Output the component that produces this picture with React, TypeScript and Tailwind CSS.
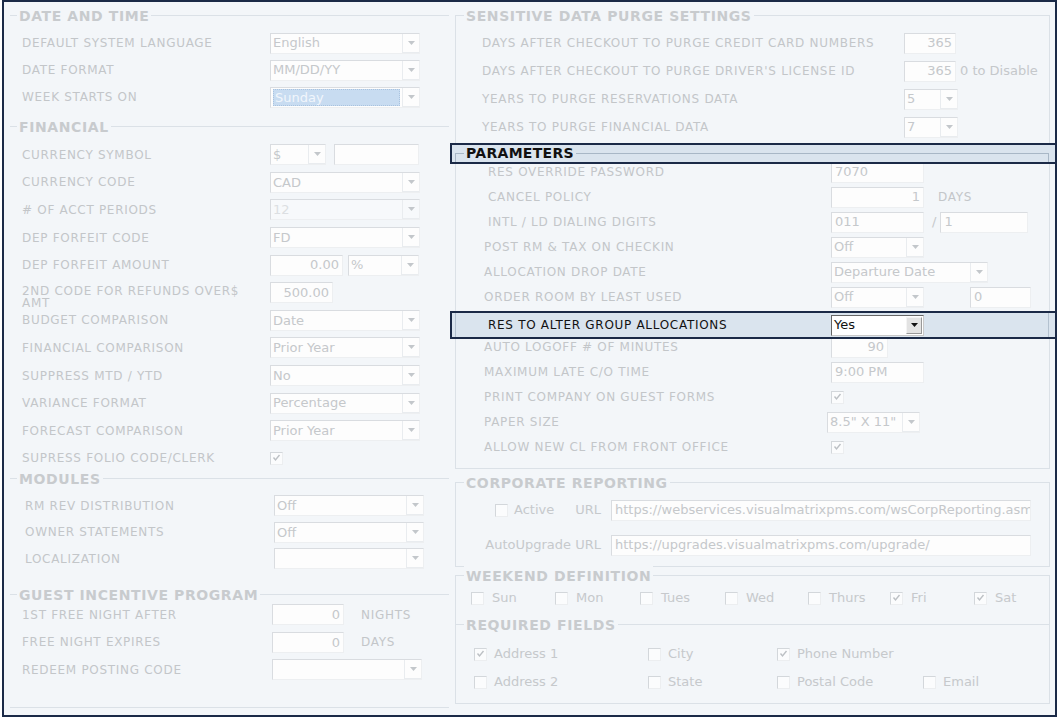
import React from "react";

function Tri({ dark }: { dark?: boolean }) {
  return (
    <svg width="7" height="4" viewBox="0 0 7 4">
      <path d="M0 0H7L3.5 4Z" fill={dark ? "#111" : "#c3c7cb"} />
    </svg>
  );
}

function Select({ value, w, hl, dim }: { value?: string; w: string; hl?: boolean; dim?: boolean }) {
  return (
    <div
      className={`flex h-[21px] ${w} shrink-0 border border-[#d9dce0] border-r-[#edeff1] border-b-[#edeff1] ${
        dim ? "bg-[#f7f9fb] text-[#dcdfe2]" : "bg-[#fdfdfd]"
      }`}
    >
      <div className="flex min-w-0 flex-1 items-center overflow-hidden px-[2px]">
        {hl ? (
          <span className="w-full border border-dotted border-[#a9c3df] bg-[#c8dcf1] px-[1px] leading-[15px] text-[#f1f6fc]">
            {value}
          </span>
        ) : (
          <span className="whitespace-nowrap">{value}</span>
        )}
      </div>
      <div className="flex w-[17px] items-center justify-center border-b border-l border-[#e9ecef]">
        <Tri />
      </div>
    </div>
  );
}

function Box({ value, w, right }: { value?: string; w: string; right?: boolean }) {
  return (
    <div
      className={`flex h-[21px] ${w} shrink-0 items-center overflow-hidden whitespace-nowrap border border-[#d9dce0] border-r-[#edeff1] border-b-[#edeff1] bg-[#fdfdfd] px-[3px] ${
        right ? "justify-end" : ""
      }`}
    >
      {value}
    </div>
  );
}

function Check({ on }: { on?: boolean }) {
  return (
    <div className="flex h-[13px] w-[13px] shrink-0 items-center justify-center border border-[#d3d7db] border-r-[#eceef0] border-b-[#eceef0] bg-[#fbfcfd]">
      {on && (
        <svg width="9" height="8" viewBox="0 0 9 8">
          <path d="M1.5 3.5L3.5 6L7.5 1" stroke="#bcc0c4" strokeWidth="1.4" fill="none" />
        </svg>
      )}
    </div>
  );
}

function Row({
  h,
  lc,
  label,
  children,
}: {
  h: string;
  lc: string;
  label: React.ReactNode;
  children?: React.ReactNode;
}) {
  return (
    <div className={`flex ${h} items-center`}>
      <div className={`${lc} shrink-0 text-[12px] leading-[12px] tracking-[0.7px] text-[#c3c6c9]`}>{label}</div>
      <div className="flex items-center text-[13px] text-[#c5c8cb]">{children}</div>
    </div>
  );
}

function Legend({ title, ml }: { title: string; ml: string }) {
  return (
    <div
      className={`-mt-[10px] h-[20px] w-fit ${ml} bg-[#f3f6f9] px-[2px] text-[14px] font-bold leading-[20px] tracking-[0.6px] text-[#c8cbce]`}
    >
      {title}
    </div>
  );
}

const Unit = ({ children, ml }: { children: React.ReactNode; ml: string }) => (
  <span className={`${ml} text-[12px] tracking-[0.7px] text-[#c3c6c9]`}>{children}</span>
);

export default function App() {
  const L = "w-[260px] pl-[12px]";
  const LM = "w-[264px] pl-[15px]";
  const SP = "w-[448px] pl-[26px]";
  const P1 = "w-[375px] pl-[32px]";
  const P2 = "w-[375px] pl-[28px]";
  const FR = "h-[27.6px]";

  return (
    <div className="pl-[2px] font-['DejaVu_Sans',sans-serif]">
      <div className="flex h-[717px] w-[1055px] border-2 border-[#1b2a47] bg-[#f3f6f9]">
        {/* left column */}
        <div className="flex w-[445px] flex-col pl-[6px]">
          <div className="mt-[13px] border-t border-[#dbe1e7]">
            <Legend title="DATE AND TIME" ml="ml-[7px]" />
            <div className="pt-[3.5px]">
              <Row h="h-[27px]" lc={L} label="DEFAULT SYSTEM LANGUAGE">
                <Select w="w-[150px]" value="English" />
              </Row>
              <Row h="h-[27px]" lc={L} label="DATE FORMAT">
                <Select w="w-[150px]" value="MM/DD/YY" />
              </Row>
              <Row h="h-[27px]" lc={L} label="WEEK STARTS ON">
                <Select w="w-[150px]" value="Sunday" hl />
              </Row>
            </div>
          </div>

          <div className="mt-[15.5px] border-t border-[#dbe1e7]">
            <Legend title="FINANCIAL" ml="ml-[7px]" />
            <div className="pt-[4px]">
              <Row h={FR} lc={L} label="CURRENCY SYMBOL">
                <Select w="w-[56px]" value="$" />
                <div className="ml-[8px]">
                  <Box w="w-[85px]" />
                </div>
              </Row>
              <Row h={FR} lc={L} label="CURRENCY CODE">
                <Select w="w-[150px]" value="CAD" />
              </Row>
              <Row h={FR} lc={L} label="# OF ACCT PERIODS">
                <Select w="w-[150px]" value="12" dim />
              </Row>
              <Row h={FR} lc={L} label="DEP FORFEIT CODE">
                <Select w="w-[150px]" value="FD" />
              </Row>
              <Row h={FR} lc={L} label="DEP FORFEIT AMOUNT">
                <Box w="w-[73px]" value="0.00" right />
                <div className="ml-[5px]">
                  <Select w="w-[71px]" value="%" />
                </div>
              </Row>
              <Row
                h={FR}
                lc={L}
                label={
                  <span className="block pt-[8px]">
                    2ND CODE FOR REFUNDS OVER$
                    <br />
                    AMT
                  </span>
                }
              >
                <Box w="w-[63px]" value="500.00" right />
              </Row>
              <Row h={FR} lc={L} label="BUDGET COMPARISON">
                <Select w="w-[150px]" value="Date" />
              </Row>
              <Row h={FR} lc={L} label="FINANCIAL COMPARISON">
                <Select w="w-[150px]" value="Prior Year" />
              </Row>
              <Row h={FR} lc={L} label="SUPPRESS MTD / YTD">
                <Select w="w-[150px]" value="No" />
              </Row>
              <Row h={FR} lc={L} label="VARIANCE FORMAT">
                <Select w="w-[150px]" value="Percentage" />
              </Row>
              <Row h={FR} lc={L} label="FORECAST COMPARISON">
                <Select w="w-[150px]" value="Prior Year" />
              </Row>
              <Row h={FR} lc={L} label="SUPRESS FOLIO CODE/CLERK">
                <Check on />
              </Row>
            </div>
          </div>

          <div className="mt-[6px] border-t border-[#dbe1e7]">
            <Legend title="MODULES" ml="ml-[7px]" />
            <div className="pt-[3.5px]">
              <Row h="h-[26.5px]" lc={LM} label="RM REV DISTRIBUTION">
                <Select w="w-[150px]" value="Off" />
              </Row>
              <Row h="h-[26.5px]" lc={LM} label="OWNER STATEMENTS">
                <Select w="w-[150px]" value="Off" />
              </Row>
              <Row h="h-[26.5px]" lc={LM} label="LOCALIZATION">
                <Select w="w-[150px]" />
              </Row>
            </div>
          </div>

          <div className="mt-[22px] border-t border-b border-[#dbe1e7] pb-[23.5px]">
            <Legend title="GUEST INCENTIVE PROGRAM" ml="ml-[7px]" />
            <div className="-mt-[4px]">
              <Row h="h-[27.5px]" lc="w-[262px] pl-[12px]" label="1ST FREE NIGHT AFTER">
                <Box w="w-[72px]" value="0" right />
                <Unit ml="ml-[17px]">NIGHTS</Unit>
              </Row>
              <Row h="h-[27.5px]" lc="w-[262px] pl-[12px]" label="FREE NIGHT EXPIRES">
                <Box w="w-[72px]" value="0" right />
                <Unit ml="ml-[17px]">DAYS</Unit>
              </Row>
              <Row h="h-[27.5px]" lc="w-[262px] pl-[12px]" label="REDEEM POSTING CODE">
                <Select w="w-[150px]" />
              </Row>
            </div>
          </div>
        </div>

        {/* right column */}
        <div className="ml-[6px] flex w-[595px] flex-col">
          <div className="mt-[13px] border border-[#dbe1e7] pb-[8.5px]">
            <Legend title="SENSITIVE DATA PURGE SETTINGS" ml="ml-[8px]" />
            <div className="pt-[3px]">
              <Row h="h-[28px]" lc={SP} label="DAYS AFTER CHECKOUT TO PURGE CREDIT CARD NUMBERS">
                <Box w="w-[52px]" value="365" right />
              </Row>
              <Row h="h-[28px]" lc={SP} label="DAYS AFTER CHECKOUT TO PURGE DRIVER'S LICENSE ID">
                <Box w="w-[52px]" value="365" right />
                <span className="ml-[4px]">0 to Disable</span>
              </Row>
              <Row h="h-[28px]" lc={SP} label="YEARS TO PURGE RESERVATIONS DATA">
                <Select w="w-[54px]" value="5" />
              </Row>
              <Row h="h-[28px]" lc={SP} label="YEARS TO PURGE FINANCIAL DATA">
                <Select w="w-[54px]" value="7" />
              </Row>
            </div>

            <div className="relative z-10 -mr-[8px] -ml-[6px] mt-[2px] flex h-[21px] border-2 border-[#1b2a47] bg-[#dae4ee]">
              <div className="mt-[8px] ml-[3px] w-[9px] border-t border-l border-[#a8b7c6]" />
              <span className="px-[2px] text-[14px] font-bold leading-[17px] tracking-[0.3px] text-[#111]">
                PARAMETERS
              </span>
              <div className="mt-[8px] mr-[6px] flex-1 border-t border-r border-[#a8b7c6]" />
            </div>

            <div className="-mt-[4.5px]">
              <Row h="h-[25px]" lc={P1} label="RES OVERRIDE PASSWORD">
                <Box w="w-[93px]" value="7070" />
              </Row>
              <Row h="h-[25px]" lc={P1} label="CANCEL POLICY">
                <Box w="w-[93px]" value="1" right />
                <Unit ml="ml-[14px]">DAYS</Unit>
              </Row>
              <Row h="h-[25px]" lc={P1} label="INTL / LD DIALING DIGITS">
                <Box w="w-[93px]" value="011" />
                <span className="ml-[8px]">/</span>
                <div className="ml-[4px]">
                  <Box w="w-[88px]" value="1" />
                </div>
              </Row>
              <Row h="h-[25px]" lc={P2} label="POST RM & TAX ON CHECKIN">
                <Select w="w-[93px]" value="Off" />
              </Row>
              <Row h="h-[25px]" lc={P2} label="ALLOCATION DROP DATE">
                <Select w="w-[157px]" value="Departure Date" />
              </Row>
              <Row h="h-[25px]" lc={P2} label="ORDER ROOM BY LEAST USED">
                <Select w="w-[93px]" value="Off" />
                <div className="ml-[46px]">
                  <Box w="w-[61px]" value="0" />
                </div>
              </Row>

              <div className="relative z-10 -mr-[8px] -ml-[6px] mt-[1.5px] -mb-[4.5px] flex h-[28px] items-center border-2 border-[#1b2a47] bg-[#dae4ee]">
                <div className="ml-[3px] h-full w-px bg-[#b3c1cf]" />
                <div className="w-[375px] shrink-0 pl-[32px] text-[12px] tracking-[0.7px] text-[#111]">
                  RES TO ALTER GROUP ALLOCATIONS
                </div>
                <div className="flex h-[21px] w-[93px] border border-[#666] border-r-[#c9c9c9] border-b-[#c9c9c9] bg-white">
                  <div className="flex flex-1 items-center pl-[2px] text-[13px] text-[#111]">Yes</div>
                  <div className="m-[1px] flex w-[16px] items-center justify-center border border-[#f4f4f4] border-r-[#999] border-b-[#999] bg-[#e3e3e3]">
                    <Tri dark />
                  </div>
                </div>
                <div className="mr-[6px] ml-auto h-full w-px bg-[#b3c1cf]" />
              </div>

              <Row h="h-[25px]" lc={P2} label="AUTO LOGOFF # OF MINUTES">
                <Box w="w-[57px]" value="90" right />
              </Row>
              <Row h="h-[25px]" lc={P2} label="MAXIMUM  LATE C/O TIME">
                <Box w="w-[93px]" value="9:00 PM" />
              </Row>
              <Row h="h-[25px]" lc={P2} label="PRINT COMPANY ON GUEST FORMS">
                <Check on />
              </Row>
              <Row h="h-[25px]" lc={P2} label="PAPER SIZE">
                <div className="-ml-[4px]">
                  <Select w="w-[93px]" value={'8.5" X 11"'} />
                </div>
              </Row>
              <Row h="h-[25px]" lc={P2} label="ALLOW NEW CL FROM FRONT OFFICE">
                <Check on />
              </Row>
            </div>
          </div>

          <div className="mt-[13px] border border-[#dbe1e7] pb-[8px]">
            <Legend title="CORPORATE REPORTING" ml="ml-[8px]" />
            <div className="pt-[4px] text-[13px] text-[#c6c9cc]">
              <div className="flex h-[26px] items-center">
                <div className="flex w-[148px] shrink-0 items-center justify-end pr-[3px]">
                  <Check />
                  <span className="ml-[6px]">Active</span>
                  <span className="ml-[21px]">URL</span>
                </div>
                <div className="ml-[7px] text-[#c5c8cb]">
                  <Box w="w-[420px]" value="https://webservices.visualmatrixpms.com/wsCorpReporting.asmx" />
                </div>
              </div>
              <div className="mt-[9px] flex h-[26px] items-center">
                <div className="w-[148px] shrink-0 pr-[3px] text-right">AutoUpgrade URL</div>
                <div className="ml-[7px] text-[#c5c8cb]">
                  <Box w="w-[420px]" value="https://upgrades.visualmatrixpms.com/upgrade/" />
                </div>
              </div>
            </div>
          </div>

          <div className="mt-[8px] border-x border-t border-[#dbe1e7] pb-[18px]">
            <Legend title="WEEKEND DEFINITION" ml="ml-[8px]" />
            <div className="flex h-[20px] items-center pt-[4px] pl-[15px] text-[13px] text-[#c6c9cc]">
              {[
                ["Sun", "w-[84px]", false],
                ["Mon", "w-[85px]", false],
                ["Tues", "w-[85px]", false],
                ["Wed", "w-[83px]", false],
                ["Thurs", "w-[82px]", false],
                ["Fri", "w-[84px]", true],
                ["Sat", "w-[60px]", true],
              ].map(([d, w, on]) => (
                <div key={d as string} className={`flex ${w} shrink-0 items-center`}>
                  <Check on={on as boolean} />
                  <span className="ml-[8px]">{d}</span>
                </div>
              ))}
            </div>
          </div>

          <div className="border border-[#dbe1e7] pb-[7px]">
            <Legend title="REQUIRED FIELDS" ml="ml-[8px]" />
            <div className="pt-[5px] pl-[18px] text-[13px] text-[#c6c9cc]">
              <div className="flex h-[28px] items-center">
                <div className="flex w-[174px] items-center">
                  <Check on />
                  <span className="ml-[7px]">Address 1</span>
                </div>
                <div className="flex w-[129px] items-center">
                  <Check />
                  <span className="ml-[7px]">City</span>
                </div>
                <div className="flex w-[146px] items-center">
                  <Check on />
                  <span className="ml-[7px]">Phone Number</span>
                </div>
              </div>
              <div className="flex h-[28px] items-center">
                <div className="flex w-[174px] items-center">
                  <Check />
                  <span className="ml-[7px]">Address 2</span>
                </div>
                <div className="flex w-[129px] items-center">
                  <Check />
                  <span className="ml-[7px]">State</span>
                </div>
                <div className="flex w-[146px] items-center">
                  <Check />
                  <span className="ml-[7px]">Postal Code</span>
                </div>
                <div className="flex items-center">
                  <Check />
                  <span className="ml-[7px]">Email</span>
                </div>
              </div>
            </div>
          </div>
        </div>
      </div>
    </div>
  );
}
